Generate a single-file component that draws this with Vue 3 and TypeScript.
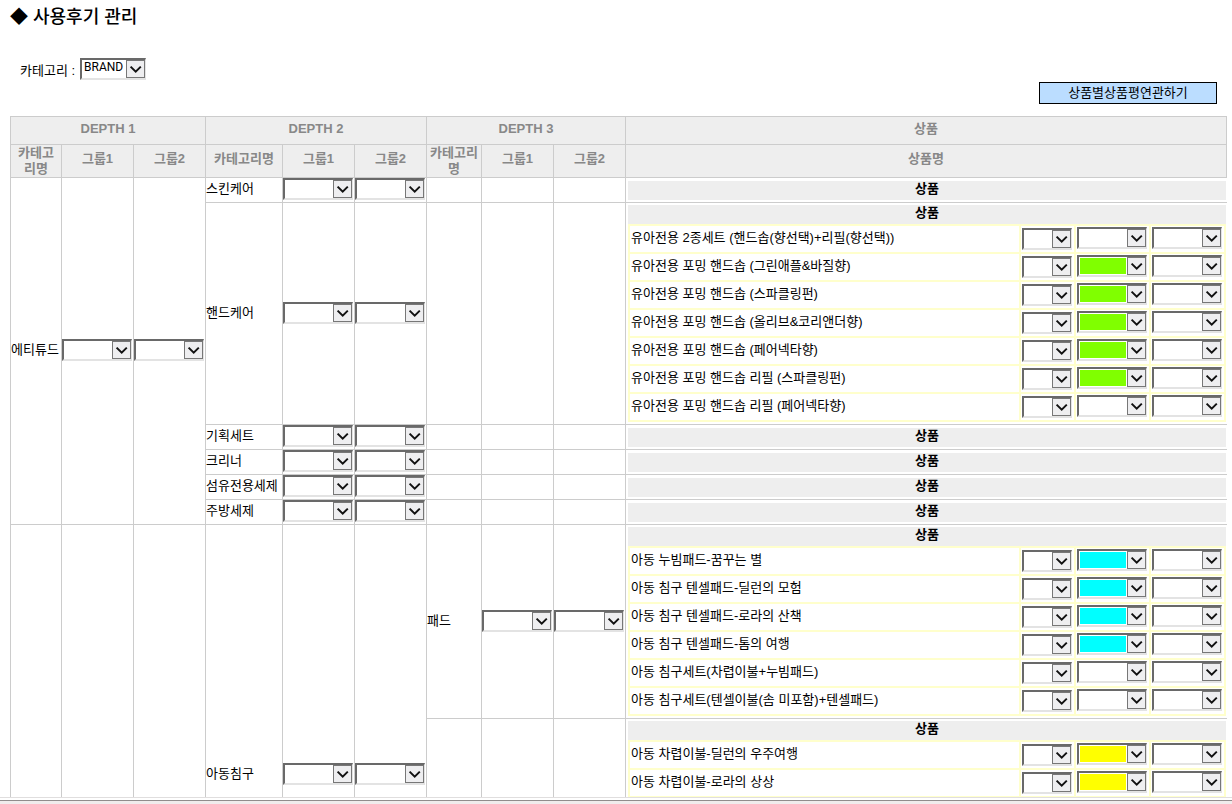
<script setup lang="ts">
import { h } from 'vue'

interface DropProps {
  label: string
  size?: string
  fill?: string
  options?: string[]
}

// Sunken list box with a framed chevron button
const DropList = (props: DropProps) =>
  h('span', { class: ['drop', props.size ? `drop-${props.size}` : ''] }, [
    h(
      'select',
      { 'aria-label': props.label, class: props.fill ? `fill-${props.fill}` : '' },
      (props.options ?? ['']).map((text) => h('option', text)),
    ),
    h('svg', { viewBox: '0 0 19 18', 'aria-hidden': 'true' }, [
      h('rect', { x: 0.5, y: 0.5, width: 18, height: 17, fill: '#eeeef0', stroke: '#777' }),
      h('path', { d: 'M4.6 6.6L9.7 11.6L14.8 6.6', fill: 'none', stroke: '#111', 'stroke-width': 2 }),
    ]),
  ])
DropList.props = ['label', 'size', 'fill', 'options']

interface Product {
  name: string
  fill?: string
}

interface Row {
  brand?: { name: string; span: number }
  second?: { name: string; span: number }
  third?: string
  products: Product[]
  open?: boolean
}

const rows: Row[] = [
  { brand: { name: '에티튜드', span: 6 }, second: { name: '스킨케어', span: 1 }, products: [] },
  {
    second: { name: '핸드케어', span: 1 },
    products: [
      { name: '유아전용 2종세트 (핸드솝(향선택)+리필(향선택))' },
      { name: '유아전용 포밍 핸드솝 (그린애플&바질향)', fill: 'green' },
      { name: '유아전용 포밍 핸드솝 (스파클링펀)', fill: 'green' },
      { name: '유아전용 포밍 핸드솝 (올리브&코리앤더향)', fill: 'green' },
      { name: '유아전용 포밍 핸드솝 (페어넥타향)', fill: 'green' },
      { name: '유아전용 포밍 핸드솝 리필 (스파클링펀)', fill: 'green' },
      { name: '유아전용 포밍 핸드솝 리필 (페어넥타향)' },
    ],
  },
  { second: { name: '기획세트', span: 1 }, products: [] },
  { second: { name: '크리너', span: 1 }, products: [] },
  { second: { name: '섬유전용세제', span: 1 }, products: [] },
  { second: { name: '주방세제', span: 1 }, products: [] },
  {
    brand: { name: '', span: 2 },
    second: { name: '아동침구', span: 2 },
    third: '패드',
    products: [
      { name: '아동 누빔패드-꿈꾸는 별', fill: 'cyan' },
      { name: '아동 침구 텐셀패드-딜런의 모험', fill: 'cyan' },
      { name: '아동 침구 텐셀패드-로라의 산책', fill: 'cyan' },
      { name: '아동 침구 텐셀패드-톰의 여행', fill: 'cyan' },
      { name: '아동 침구세트(차렵이불+누빔패드)' },
      { name: '아동 침구세트(텐셀이불(솜 미포함)+텐셀패드)' },
    ],
  },
  {
    open: true,
    products: [
      { name: '아동 차렵이불-딜런의 우주여행', fill: 'yellow' },
      { name: '아동 차렵이불-로라의 상상', fill: 'yellow' },
    ],
  },
]
</script>

<template>
  <div class="window">
    <main class="page">
      <h1>◆ 사용후기 관리</h1>
      <div class="filter">
        <span>카테고리 :</span>
        <DropList label="카테고리" size="brand" :options="['BRAND']" />
      </div>
      <div class="actions">
        <button type="button">상품별상품평연관하기</button>
      </div>

      <table class="tree">
        <colgroup>
          <col class="c-first" />
          <col class="c-group" />
          <col class="c-group" />
          <col class="c-second" />
          <col class="c-group" />
          <col class="c-group" />
          <col class="c-third" />
          <col class="c-group" />
          <col class="c-group" />
          <col />
        </colgroup>
        <thead>
          <tr class="head-top">
            <th colspan="3">DEPTH 1</th>
            <th colspan="3">DEPTH 2</th>
            <th colspan="3">DEPTH 3</th>
            <th>상품</th>
          </tr>
          <tr class="head-sub">
            <template v-for="n in 3" :key="n">
              <th :class="{ wrapped: n !== 2 }">카테고리명</th>
              <th>그룹1</th>
              <th>그룹2</th>
            </template>
            <th>상품명</th>
          </tr>
        </thead>
        <tbody>
          <tr v-for="(row, i) in rows" :key="i" :class="{ open: row.open }">
            <template v-if="row.brand">
              <td :rowspan="row.brand.span">{{ row.brand.name }}</td>
              <td v-for="g in 2" :key="g" :rowspan="row.brand.span">
                <DropList v-if="row.brand.name" :label="`${row.brand.name} 그룹${g}`" />
              </td>
            </template>
            <template v-if="row.second">
              <td :rowspan="row.second.span">{{ row.second.name }}</td>
              <td v-for="g in 2" :key="g" :rowspan="row.second.span">
                <DropList :label="`${row.second.name} 그룹${g}`" />
              </td>
            </template>
            <td>{{ row.third }}</td>
            <td v-for="g in 2" :key="g">
              <DropList v-if="row.third" :label="`${row.third} 그룹${g}`" />
            </td>
            <td class="goods" :class="{ bare: !row.products.length }">
              <div class="goods-title">상품</div>
              <table v-if="row.products.length" class="list">
                <colgroup>
                  <col />
                  <col class="c-small" />
                  <col class="c-wide" />
                  <col class="c-wide" />
                </colgroup>
                <tbody>
                  <tr v-for="p in row.products" :key="p.name">
                    <td class="name">{{ p.name }}</td>
                    <td class="pick lower"><DropList :label="`${p.name} 순서`" size="small" /></td>
                    <td class="pick"><DropList :label="`${p.name} 그룹1`" size="wide" :fill="p.fill" /></td>
                    <td class="pick"><DropList :label="`${p.name} 그룹2`" size="wide" /></td>
                  </tr>
                </tbody>
              </table>
            </td>
          </tr>
        </tbody>
      </table>
    </main>
    <div class="frame-edge"></div>
  </div>
</template>

<style scoped>
.window {
  height: 100vh;
  display: flex;
  flex-direction: column;
  background: #fff;
  color: #000;
  font: 13px/16px "Liberation Sans", "Noto Sans CJK KR", sans-serif;
}
.page {
  flex: 1;
  min-height: 0;
  overflow: hidden;
  padding: 5px 5px 0 10px;
}
h1 {
  margin: 0;
  font-size: 18px;
  line-height: 24px;
  font-weight: 500;
}
.filter {
  display: flex;
  align-items: center;
  gap: 5px;
  margin-top: 29px;
  padding-left: 10px;
}
.filter > span:first-child {
  padding-top: 4px;
}
.actions {
  display: flex;
  justify-content: flex-end;
  margin: 2px 10px 12px 0;
}
button {
  width: 178px;
  height: 22px;
  padding: 0;
  border: 1px solid #000;
  border-radius: 0;
  background: #bbddff;
  color: #000;
  font: inherit;
}
table {
  border-collapse: collapse;
  table-layout: fixed;
}
.tree {
  width: 100%;
}
.c-first { width: 51px; }
.c-group { width: 72px; }
.c-second { width: 77px; }
.c-third { width: 55px; }
.c-small { width: 55px; }
.c-wide { width: 75px; }
th {
  border: 1px solid #ccc;
  padding: 0 2px;
  background: #eee;
  color: #888;
  font-weight: 700;
  word-break: break-all;
}
.head-top th {
  height: 24px;
  padding-bottom: 3px;
}
.head-sub th {
  height: 28px;
  padding-bottom: 4px;
}
.head-sub th.wrapped {
  height: 32px;
  padding-bottom: 0;
}
td {
  padding: 0;
}
.tree > tbody > tr > td {
  height: 22px;
  padding-bottom: 2px;
  border: 1px solid #ccc;
  white-space: nowrap;
}
.tree > tbody > tr.open > td {
  height: 301px;
}
.tree > tbody > tr > td.goods {
  padding: 2px 0 2px 2px;
  border-right-color: transparent;
  vertical-align: top;
}
.tree > tbody > tr > td.bare {
  height: 19px;
  padding-top: 3px;
}
.goods-title {
  height: 19px;
  background: #eee;
  font-weight: 700;
  line-height: 16px;
  text-align: center;
}
.list {
  width: 100%;
}
.list td {
  height: 28px;
  border: 2px solid #ffffcc;
  box-sizing: border-box;
}
.list .name {
  padding: 0 0 2px 1px;
}
.list .pick {
  padding: 1px 1px 0;
  vertical-align: top;
}
.list .lower {
  padding-top: 2px;
}
.frame-edge {
  height: 3px;
  margin-top: 1px;
  border-top: 1px solid #918c8c;
  background: #f0ecec;
  box-shadow: 0 -2px 0 #fff, 0 -3px 0 #e0dede;
}
</style>

<style>
body {
  margin: 0;
}
.drop {
  display: grid;
  grid-template-columns: 1fr 19px;
  grid-template-rows: 18px;
  box-sizing: border-box;
  width: 70px;
  height: 22px;
  border-style: solid;
  border-width: 2px 1px 2px 2px;
  border-color: #696969 #e3e3e3 #e3e3e3 #696969;
  background: #fff;
}
.drop-small {
  width: 50px;
}
.drop-brand {
  width: 66px;
}
.drop select {
  grid-area: 1 / 1 / 2 / 3;
  box-sizing: border-box;
  width: 100%;
  height: 18px;
  margin: 0;
  padding: 1px 20px 1px 1px;
  border: 0;
  border-radius: 0;
  appearance: none;
  background-color: transparent;
  background-clip: content-box;
  color: #000;
  font: 12px/14px Roboto, "Noto Sans CJK KR", sans-serif;
}
.drop-brand select {
  padding: 0 19px 4px 2px;
}
.drop svg {
  grid-area: 1 / 2 / 2 / 3;
  width: 19px;
  height: 18px;
  pointer-events: none;
}
.drop .fill-green {
  background-color: #80ff00;
}
.drop .fill-cyan {
  background-color: #00ffff;
}
.drop .fill-yellow {
  background-color: #ffff00;
}
</style>
